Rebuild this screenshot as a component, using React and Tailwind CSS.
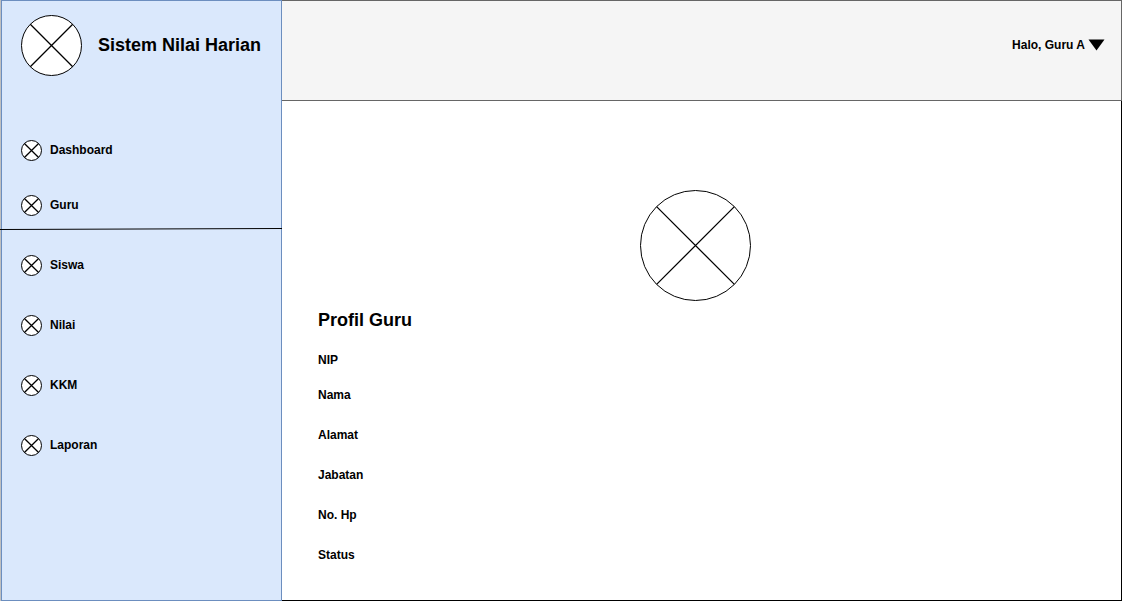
function CrossedCircle({ size, className = '' }) {
  const c = size / 2;
  const r = c - 0.5;
  const d = r * Math.SQRT1_2;
  return (
    <svg
      width={size}
      height={size}
      viewBox={`0 0 ${size} ${size}`}
      fill="white"
      stroke="black"
      className={`shrink-0 ${className}`}
      aria-hidden="true"
    >
      <circle cx={c} cy={c} r={r} />
      <path
        strokeWidth="1.3"
        d={`M${c - d} ${c - d}L${c + d} ${c + d}M${c - d} ${c + d}L${c + d} ${c - d}`}
      />
    </svg>
  );
}

function NavItem({ label }) {
  return (
    <li>
      <a href="#" className="flex h-5 items-center gap-2">
        <CrossedCircle size={21} />
        <span>{label}</span>
      </a>
    </li>
  );
}

function Sidebar() {
  return (
    <aside className="flex w-[281px] shrink-0 flex-col border border-[#6c8ebf] bg-[#dae8fc]">
      <div className="flex h-[88px] items-center gap-4 pl-[19px]">
        <CrossedCircle size={61} />
        <span className="text-lg leading-5 whitespace-nowrap">Sistem Nilai Harian</span>
      </div>
      <nav className="pt-[51px]">
        <ul className="flex flex-col gap-[35px] pl-[19px]">
          <NavItem label="Dashboard" />
          <NavItem label="Guru" />
        </ul>
        <svg
          className="-mr-px -ml-[2px] mt-3 block h-[3px] w-[282px]"
          viewBox="0 0 282 3"
          stroke="black"
          aria-hidden="true"
        >
          <path d="M0 2.5L282 1.5" />
        </svg>
        <ul className="flex flex-col gap-10 pt-[25px] pl-[19px]">
          <NavItem label="Siswa" />
          <NavItem label="Nilai" />
          <NavItem label="KKM" />
          <NavItem label="Laporan" />
        </ul>
      </nav>
    </aside>
  );
}

function Header() {
  return (
    <header className="flex h-[101px] shrink-0 items-center justify-end border-y border-r border-[#666666] bg-[#f5f5f5] pr-4 pb-[11px]">
      <button type="button" className="flex items-center gap-[3px] font-bold">
        Halo, Guru A
        <svg width="17" height="12" viewBox="0 0 17 12" aria-hidden="true">
          <path d="M0.5 0.5H16.5L8.5 11.5Z" />
        </svg>
      </button>
    </header>
  );
}

function Profile() {
  return (
    <main className="flex-1 border-r border-b border-black pt-[89px] pr-12 pb-[35px] pl-9">
      <CrossedCircle size={111} className="mx-auto" />
      <h1 className="mt-[9px] text-lg leading-5">Profil Guru</h1>
      <ul className="flex flex-col gap-5 pt-5">
        <li>NIP</li>
        <li className="-mt-[5px]">Nama</li>
        <li>Alamat</li>
        <li>Jabatan</li>
        <li>No. Hp</li>
        <li>Status</li>
      </ul>
    </main>
  );
}

export default function App() {
  return (
    <div className="flex min-h-screen bg-white pb-px font-['Liberation_Sans',Arial,sans-serif] text-xs leading-5 font-bold text-black">
      <div className="flex flex-1 border-l border-[#c0c0c0]">
        <Sidebar />
        <div className="flex min-w-0 flex-1 flex-col">
          <Header />
          <Profile />
        </div>
      </div>
    </div>
  );
}
